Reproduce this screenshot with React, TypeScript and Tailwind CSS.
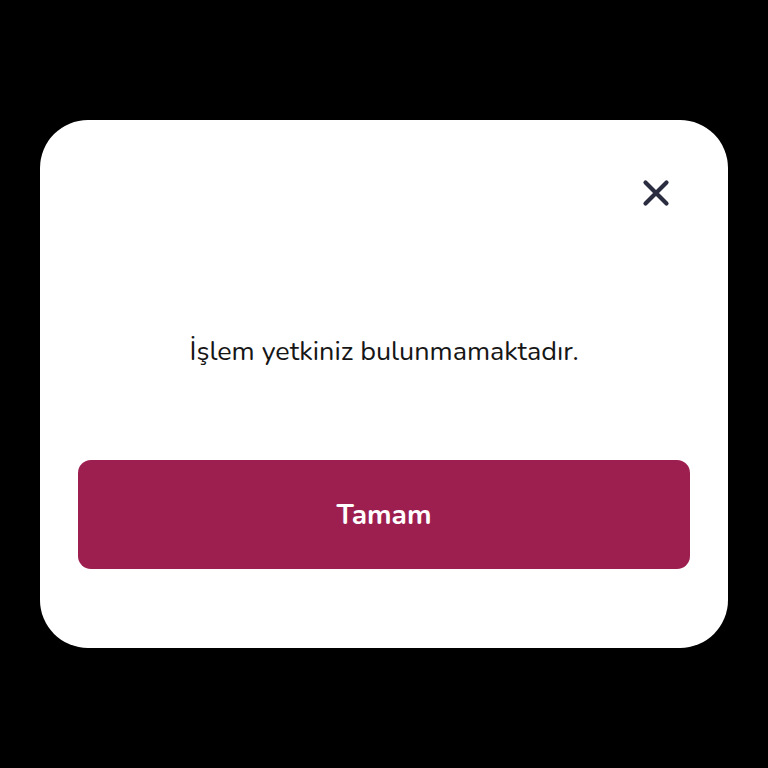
import React from "react";

const App: React.FC = () => {
  return (
    <div
      className="w-full h-[768px] bg-black flex items-center justify-center"
      style={{ fontFamily: "Nunito, Lato, 'Open Sans', sans-serif" }}
    >
      <div className="w-[688px] h-[528px] bg-white rounded-[48px] flex flex-col px-[38px]">
        <div className="flex justify-end pt-[59px] pr-[20px]">
          <button className="w-[28px] h-[28px] flex items-center justify-center">
            <svg width="28" height="28" viewBox="0 0 28 28" fill="none">
              <path
                d="M3.5 3.5L24.5 24.5M24.5 3.5L3.5 24.5"
                stroke="#2a2c40"
                strokeWidth="4.2"
                strokeLinecap="round"
              />
            </svg>
          </button>
        </div>
        <p className="mt-[127px] text-center text-[27px] leading-[36px] text-[#161616]">
          İşlem yetkiniz bulunmamaktadır.
        </p>
        <button className="mt-[90px] h-[109px] w-full rounded-[13px] bg-[#9d1f50] text-white text-[28px] font-bold">
          Tamam
        </button>
      </div>
    </div>
  );
};

export default App;
